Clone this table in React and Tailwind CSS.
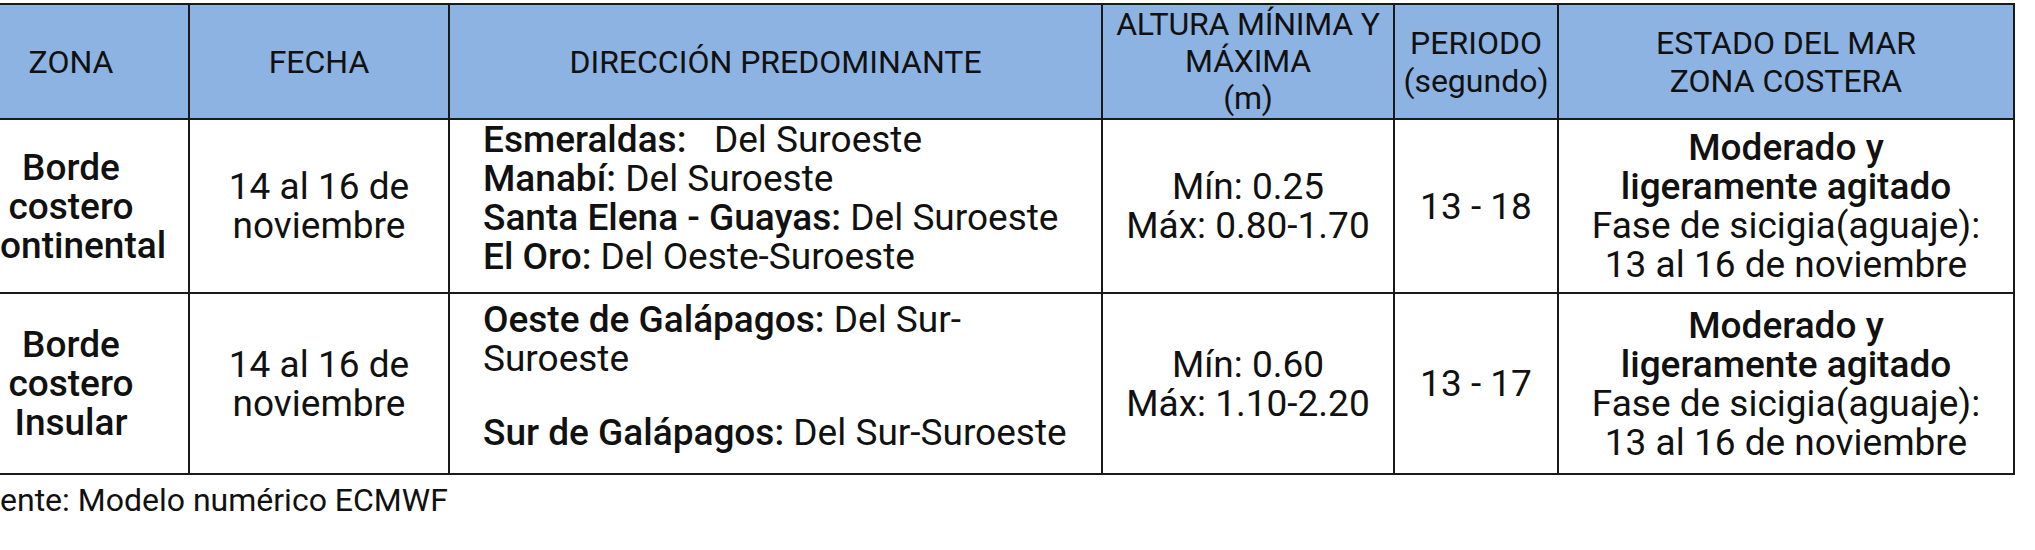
const rows = [
  {
    zona: ['Borde', 'costero', 'Continental'],
    fecha: ['14 al 16 de', 'noviembre'],
    dir: [
      { b: 'Esmeraldas:', t: '   Del Suroeste' },
      { b: 'Manabí:', t: ' Del Suroeste' },
      { b: 'Santa Elena - Guayas:', t: ' Del Suroeste' },
      { b: 'El Oro:', t: ' Del Oeste-Suroeste' },
    ],
    altura: ['Mín: 0.25', 'Máx: 0.80-1.70'],
    periodo: '13 - 18',
    h: 'h-[174px]',
  },
  {
    zona: ['Borde', 'costero', 'Insular'],
    fecha: ['14 al 16 de', 'noviembre'],
    dir: null,
    altura: ['Mín: 0.60', 'Máx: 1.10-2.20'],
    periodo: '13 - 17',
    h: 'h-[181px]',
  },
]

const cell = 'border-2 border-[#1a1a1a] p-0'

export default function App() {
  return (
    <div className="w-[2035px] h-[550px] overflow-hidden bg-white [font-family:Roboto,sans-serif] text-[#111]">
      <table className="ml-[-48px] mt-[3px] w-[2061px] table-fixed border-collapse">
        <colgroup>
          <col className="w-[236px]" />
          <col className="w-[260px]" />
          <col className="w-[653px]" />
          <col className="w-[292px]" />
          <col className="w-[164px]" />
          <col className="w-[456px]" />
        </colgroup>
        <thead>
          <tr className="h-[115px] bg-[#8db3e2] text-[32px] leading-[38px] text-center align-middle">
            <th className={`${cell} font-normal`}>ZONA</th>
            <th className={`${cell} font-normal`}>FECHA</th>
            <th className={`${cell} font-normal`}>DIRECCIÓN PREDOMINANTE</th>
            <th className={`${cell} font-normal leading-[37px] tracking-[-0.2px]`}>
              ALTURA MÍNIMA Y<br />MÁXIMA<br />(m)
            </th>
            <th className={`${cell} font-normal`}>
              PERIODO<br />(segundo)
            </th>
            <th className={`${cell} font-normal`}>
              ESTADO DEL MAR<br />ZONA COSTERA
            </th>
          </tr>
        </thead>
        <tbody className="text-[37px] leading-[39px]">
          {rows.map((r, i) => (
            <tr key={i} className={r.h}>
              <td className={`${cell} text-center align-middle font-medium`}>
                {r.zona.map((z) => (
                  <div key={z}>{z}</div>
                ))}
              </td>
              <td className={`${cell} text-center align-middle`}>
                {r.fecha.map((f) => (
                  <div key={f}>{f}</div>
                ))}
              </td>
              <td className={`${cell} align-top pl-[33px] ${i === 1 ? 'pt-[6px]' : 'pt-0'}`}>
                {r.dir ? (
                  r.dir.map((d) => (
                    <div key={d.b} className="whitespace-pre">
                      <span className="font-medium">{d.b}</span>
                      {d.t}
                    </div>
                  ))
                ) : (
                  <>
                    <div>
                      <span className="font-medium">Oeste de Galápagos:</span> Del Sur-
                    </div>
                    <div>Suroeste</div>
                    <div className="h-[35px]" />
                    <div>
                      <span className="font-medium">Sur de Galápagos:</span> Del Sur-Suroeste
                    </div>
                  </>
                )}
              </td>
              <td className={`${cell} text-center align-middle`}>
                {r.altura.map((a) => (
                  <div key={a}>{a}</div>
                ))}
              </td>
              <td className={`${cell} text-center align-middle`}>{r.periodo}</td>
              <td className={`${cell} text-center align-middle`}>
                <div className="font-medium">Moderado y</div>
                <div className="font-medium">ligeramente agitado</div>
                <div>Fase de sicigia(aguaje):</div>
                <div>13 al 16 de noviembre</div>
              </td>
            </tr>
          ))}
        </tbody>
      </table>
      <p className="ml-[-35px] mt-[6px] text-[32px] leading-[38px]">Fuente: Modelo numérico ECMWF</p>
    </div>
  )
}
